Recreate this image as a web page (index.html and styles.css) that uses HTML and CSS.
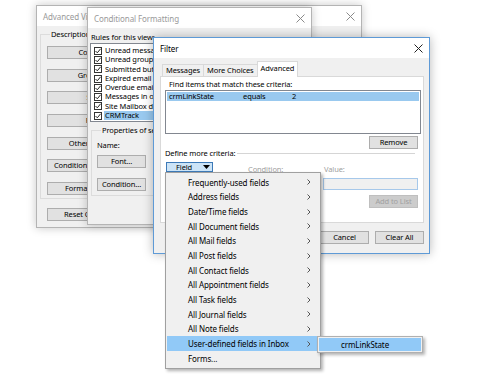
FILE: index.html
```html
<!DOCTYPE html>
<html lang="en">
<head>
  <meta charset="UTF-8">
  <title>Filter</title>
  <link rel="stylesheet" href="styles.css">
</head>
<body>
<div class="desktop">

  <div class="window win-view">
    <div class="titlebar">
      <span class="title">Advanced View Settings: Compact</span>
      <svg class="close" width="9" height="9" viewBox="0 0 9 9"><path d="M0.5 0.5L8.5 8.5M8.5 0.5L0.5 8.5" stroke="#8a8a8a"/></svg>
    </div>
    <div class="view-body">
      <fieldset class="group">
        <legend>Description</legend>
        <button class="btn wide">Columns...</button>
        <button class="btn wide">Group By...</button>
        <button class="btn wide">Sort...</button>
        <button class="btn wide">Filter...</button>
        <button class="btn wide">Other Settings...</button>
        <button class="btn wide">Conditional Formatting...</button>
        <button class="btn wide">Format Columns...</button>
      </fieldset>
      <button class="btn wide reset">Reset Current View</button>
    </div>
  </div>

  <div class="window win-cf">
    <div class="titlebar">
      <span class="title">Conditional Formatting</span>
      <svg class="close" width="9" height="9" viewBox="0 0 9 9"><path d="M0.5 0.5L8.5 8.5M8.5 0.5L0.5 8.5" stroke="#8a8a8a"/></svg>
    </div>
    <div class="cf-body">
      <div class="cf-label">Rules for this view:</div>
      <ul class="rules">
        <li><span class="chk"><svg width="6" height="6" viewBox="0 0 6 6"><path d="M0.5 3L2.3 4.8L5.6 0.8" fill="none" stroke="#222"/></svg></span><span class="rule-name">Unread messages</span></li>
        <li><span class="chk"><svg width="6" height="6" viewBox="0 0 6 6"><path d="M0.5 3L2.3 4.8L5.6 0.8" fill="none" stroke="#222"/></svg></span><span class="rule-name">Unread group headers</span></li>
        <li><span class="chk"><svg width="6" height="6" viewBox="0 0 6 6"><path d="M0.5 3L2.3 4.8L5.6 0.8" fill="none" stroke="#222"/></svg></span><span class="rule-name">Submitted but not sent</span></li>
        <li><span class="chk"><svg width="6" height="6" viewBox="0 0 6 6"><path d="M0.5 3L2.3 4.8L5.6 0.8" fill="none" stroke="#222"/></svg></span><span class="rule-name">Expired email</span></li>
        <li><span class="chk"><svg width="6" height="6" viewBox="0 0 6 6"><path d="M0.5 3L2.3 4.8L5.6 0.8" fill="none" stroke="#222"/></svg></span><span class="rule-name">Overdue email</span></li>
        <li><span class="chk"><svg width="6" height="6" viewBox="0 0 6 6"><path d="M0.5 3L2.3 4.8L5.6 0.8" fill="none" stroke="#222"/></svg></span><span class="rule-name">Messages in other folders</span></li>
        <li><span class="chk"><svg width="6" height="6" viewBox="0 0 6 6"><path d="M0.5 3L2.3 4.8L5.6 0.8" fill="none" stroke="#222"/></svg></span><span class="rule-name">Site Mailbox documents</span></li>
        <li class="selected"><span class="chk"><svg width="6" height="6" viewBox="0 0 6 6"><path d="M0.5 3L2.3 4.8L5.6 0.8" fill="none" stroke="#222"/></svg></span><span class="rule-name">CRMTrack</span></li>
      </ul>
      <fieldset class="group props">
        <legend>Properties of selected rule</legend>
        <div class="name-row">Name:</div>
        <button class="btn small">Font...</button>
        <button class="btn small cond">Condition...</button>
      </fieldset>
    </div>
  </div>

  <div class="window win-filter">
    <div class="titlebar">
      <span class="title active">Filter</span>
      <svg class="close" width="9" height="9" viewBox="0 0 9 9"><path d="M0.5 0.5L8.5 8.5M8.5 0.5L0.5 8.5" stroke="#222"/></svg>
    </div>
    <div class="filter-body">
      <div class="tabs">
        <span class="tab">Messages</span>
        <span class="tab">More Choices</span>
        <span class="tab current">Advanced</span>
      </div>
      <div class="panel">
        <div class="find-label">Find items that match these criteria:</div>
        <div class="criteria">
          <div class="crit-row selected">
            <span class="c-field">crmLinkState</span>
            <span class="c-cond">equals</span>
            <span class="c-val">2</span>
          </div>
        </div>
        <div class="right-row"><button class="btn small">Remove</button></div>
        <div class="define"><span>Define more criteria:</span><span class="rule"></span></div>
        <div class="define-grid">
          <button class="field-btn">Field <svg width="7" height="4" viewBox="0 0 7 4"><path d="M0 0H7L3.5 4Z" fill="#000"/></svg></button>
          <span class="muted">Condition:</span>
          <span class="muted value-label">Value:</span>
          <span></span>
          <span></span>
          <span class="value-input"></span>
        </div>
        <div class="right-row add"><button class="btn small disabled">Add to List</button></div>
      </div>
      <div class="footer">
        <button class="btn small">OK</button>
        <button class="btn small">Cancel</button>
        <button class="btn small">Clear All</button>
      </div>
    </div>
  </div>

  <ul class="menu">
    <li>Frequently-used fields<svg class="chev" width="4" height="6" viewBox="0 0 4 6"><path d="M0.5 0.5L3 3L0.5 5.5" fill="none" stroke="#555"/></svg></li>
    <li>Address fields<svg class="chev" width="4" height="6" viewBox="0 0 4 6"><path d="M0.5 0.5L3 3L0.5 5.5" fill="none" stroke="#555"/></svg></li>
    <li>Date/Time fields<svg class="chev" width="4" height="6" viewBox="0 0 4 6"><path d="M0.5 0.5L3 3L0.5 5.5" fill="none" stroke="#555"/></svg></li>
    <li>All Document fields<svg class="chev" width="4" height="6" viewBox="0 0 4 6"><path d="M0.5 0.5L3 3L0.5 5.5" fill="none" stroke="#555"/></svg></li>
    <li>All Mail fields<svg class="chev" width="4" height="6" viewBox="0 0 4 6"><path d="M0.5 0.5L3 3L0.5 5.5" fill="none" stroke="#555"/></svg></li>
    <li>All Post fields<svg class="chev" width="4" height="6" viewBox="0 0 4 6"><path d="M0.5 0.5L3 3L0.5 5.5" fill="none" stroke="#555"/></svg></li>
    <li>All Contact fields<svg class="chev" width="4" height="6" viewBox="0 0 4 6"><path d="M0.5 0.5L3 3L0.5 5.5" fill="none" stroke="#555"/></svg></li>
    <li>All Appointment fields<svg class="chev" width="4" height="6" viewBox="0 0 4 6"><path d="M0.5 0.5L3 3L0.5 5.5" fill="none" stroke="#555"/></svg></li>
    <li>All Task fields<svg class="chev" width="4" height="6" viewBox="0 0 4 6"><path d="M0.5 0.5L3 3L0.5 5.5" fill="none" stroke="#555"/></svg></li>
    <li>All Journal fields<svg class="chev" width="4" height="6" viewBox="0 0 4 6"><path d="M0.5 0.5L3 3L0.5 5.5" fill="none" stroke="#555"/></svg></li>
    <li>All Note fields<svg class="chev" width="4" height="6" viewBox="0 0 4 6"><path d="M0.5 0.5L3 3L0.5 5.5" fill="none" stroke="#555"/></svg></li>
    <li class="hot">User-defined fields in Inbox<svg class="chev" width="4" height="6" viewBox="0 0 4 6"><path d="M0.5 0.5L3 3L0.5 5.5" fill="none" stroke="#555"/></svg></li>
    <li>Forms...</li>
  </ul>

  <div class="submenu">
    <div class="sub-item">crmLinkState</div>
  </div>

</div>
</body>
</html>
```

FILE: styles.css
```css
* {
  box-sizing: border-box;
}

body {
  margin: 0;
  background: #fff;
  font-family: "Noto Sans", sans-serif;
  font-size: 7.5px;
  letter-spacing: -0.1px;
  color: #000;
}

ul {
  list-style: none;
  margin: 0;
  padding: 0;
}

.desktop {
  position: relative;
  width: 477px;
  height: 391px;
  overflow: hidden;
}

/* windows */

.window {
  position: absolute;
  display: flex;
  flex-direction: column;
  background: #f0f0f0;
  border: 1px solid #b4b4b4;
  box-shadow: 0 0 9px rgba(0, 0, 0, 0.22);
  overflow: hidden;
}

.titlebar {
  flex: none;
  height: 20px;
  background: #fff;
  display: flex;
  align-items: center;
  justify-content: space-between;
  padding: 0 6px 0 6px;
  white-space: nowrap;
}

.title {
  color: #9a9a9a;
  font-size: 8px;
}

.title.active {
  color: #000;
}

.win-view {
  left: 36px;
  top: 5px;
  width: 326px;
  height: 223px;
}

.win-cf {
  left: 87px;
  top: 7px;
  width: 225px;
  height: 218px;
}

.win-filter {
  left: 153px;
  top: 37px;
  width: 277px;
  height: 217px;
  border-color: #5e9ad6;
  box-shadow: 0 0 10px rgba(0, 0, 0, 0.28);
}

/* buttons */

.btn {
  font: inherit;
  letter-spacing: inherit;
  color: #000;
  background: #e1e1e1;
  border: 1px solid #adadad;
  height: 13px;
  padding: 0;
  line-height: 11px;
  text-align: center;
  white-space: nowrap;
}

.btn.wide {
  display: block;
  width: 99px;
}

.btn.small {
  width: 49px;
}

.btn.disabled {
  background: #cccccc;
  border-color: #bfbfbf;
  color: #a0a0a0;
}

.group {
  margin: 0;
  border: 1px solid #dcdcdc;
  padding: 0;
}

.group legend {
  padding: 0 1px;
  line-height: 10px;
}

/* advanced view settings */

.view-body {
  padding: 3px 0 0 3px;
}

.view-body .group {
  width: 200px;
  padding: 7px 0 3px 6px;
  display: flex;
  flex-direction: column;
  gap: 9.67px;
}

.view-body .group legend {
  margin-left: 3px;
}

.reset {
  margin: 9px 0 0 7px;
}

/* conditional formatting */

.cf-body {
  padding: 4px 0 0 2px;
}

.cf-label {
  line-height: 10px;
  margin: 0 0 1px 1px;
}

.rules {
  background: #fff;
  border: 1px solid #828790;
  padding: 2px 0 1px 3px;
  width: 120px;
}

.rules li {
  display: flex;
  align-items: center;
  height: 9.3px;
  line-height: 9.3px;
}

.chk {
  width: 8px;
  height: 8px;
  border: 1px solid #333;
  background: #fff;
  display: flex;
  align-items: center;
  justify-content: center;
  margin-right: 2px;
  flex: none;
}

.chk svg {
  display: block;
}

.rule-name {
  flex: 1;
  padding-left: 1px;
  white-space: nowrap;
  overflow: hidden;
}

.rules li.selected .rule-name {
  background: #99c9ef;
}

.props {
  width: 200px;
  margin: 3px 0 0 1px;
  padding: 5px 0 4px 5px;
  display: flex;
  flex-direction: column;
  align-items: flex-start;
}

.props legend {
  margin-left: 4px;
}

.name-row {
  line-height: 10px;
  margin-bottom: 5px;
}

.btn.cond {
  margin-top: 10px;
}

/* filter */

.filter-body {
  flex: 1;
  padding: 3px 5px 0 6px;
}

.tabs {
  display: flex;
  align-items: flex-end;
  height: 15px;
  padding-left: 2px;
  position: relative;
  z-index: 1;
}

.tab {
  height: 12px;
  line-height: 11px;
  padding: 0 3px;
  border: 1px solid #d9d9d9;
  border-bottom: none;
  margin-right: -1px;
  background: #f0f0f0;
}

.tab.current {
  height: 16px;
  line-height: 13px;
  background: #fff;
  margin-bottom: -1px;
}

.panel {
  background: #fff;
  border: 1px solid #d9d9d9;
  height: 147px;
  padding: 2px 2px 0 4px;
}

.find-label {
  line-height: 10px;
  margin-left: 4px;
}

.criteria {
  height: 44px;
  border: 1px solid #828790;
  padding: 1px;
  margin-top: 1px;
}

.crit-row {
  display: flex;
  height: 9px;
  line-height: 9px;
  padding-left: 2px;
}

.crit-row.selected {
  background: #99c9ef;
}

.c-field {
  width: 74px;
}

.c-cond {
  width: 49px;
}

.right-row {
  display: flex;
  justify-content: flex-end;
  padding-right: 3px;
  margin-top: 2px;
}

.right-row.add {
  margin-top: 5px;
}

.define {
  display: flex;
  align-items: center;
  line-height: 10px;
  padding-right: 6px;
  margin-top: -1px;
}

.define .rule {
  flex: 1;
  border-top: 1px solid #d5d5d5;
  margin-left: 2px;
}

.define-grid {
  display: grid;
  grid-template-columns: 82px 75px 95px;
  align-items: end;
  margin: 4px 0 0 1px;
}

.field-btn {
  font: inherit;
  letter-spacing: inherit;
  width: 47px;
  height: 10px;
  padding: 0 0 0 9px;
  background: #cce4f7;
  border: 1px solid #3d7ab8;
  display: flex;
  align-items: center;
  gap: 11px;
  line-height: 8px;
}

.muted {
  color: #a0a0a0;
  line-height: 9px;
  margin-bottom: -2px;
}

.value-label {
  padding-left: 1px;
}

.value-input {
  height: 12px;
  margin-top: 6px;
  border: 1px solid #a6c8ea;
  background: #f0f0f0;
}

.footer {
  display: flex;
  justify-content: flex-end;
  gap: 6px;
  margin-top: 8px;
}

/* popup menu */

.menu {
  position: absolute;
  left: 165px;
  top: 172px;
  width: 156px;
  height: 197px;
  background: #f0f0f0;
  border: 1px solid #a0a0a0;
  box-shadow: 2px 2px 3px rgba(0, 0, 0, 0.3);
  padding: 2px 1px;
  font-size: 8px;
}

.menu li {
  display: flex;
  align-items: center;
  justify-content: space-between;
  height: 14.67px;
  padding: 0 8px 0 21px;
}

.menu li.hot {
  background: #91c9f7;
}

.submenu {
  position: absolute;
  left: 317px;
  top: 336px;
  width: 106px;
  height: 17px;
  background: #f0f0f0;
  border: 1px solid #b0b0b0;
  box-shadow: 2px 2px 3px rgba(0, 0, 0, 0.3);
  padding: 1px;
  font-size: 8px;
}

.sub-item {
  height: 100%;
  background: #91c9f7;
  line-height: 13px;
  padding-left: 22px;
}
```
